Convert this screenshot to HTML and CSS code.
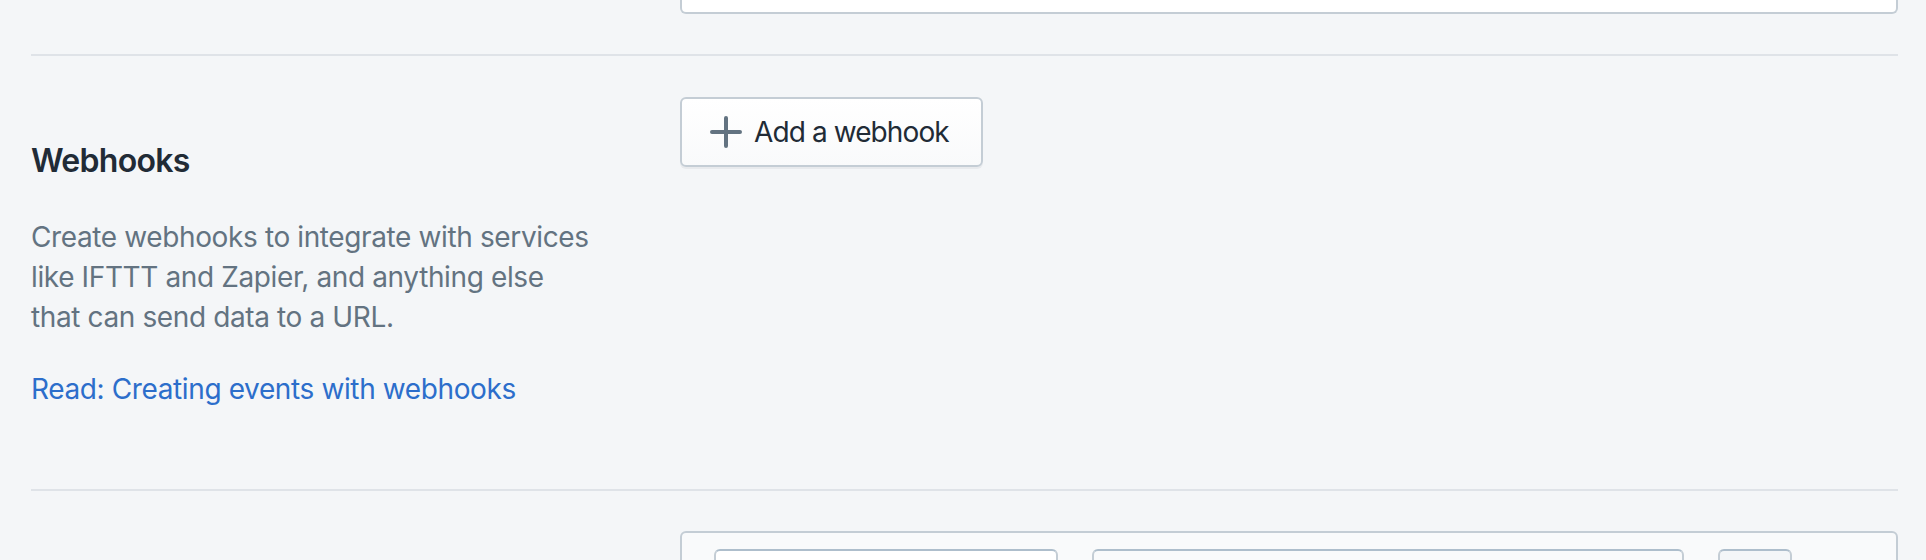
FILE: index.html
```html
<!DOCTYPE html>
<html lang="en">
<head>
<meta charset="utf-8">
<title>Webhooks settings</title>
<link rel="stylesheet" href="styles.css">
</head>
<body>
<div class="page">
  <section class="section section-top">
    <div class="annotation"></div>
    <div class="content">
      <div class="card card-clipped"></div>
    </div>
  </section>

  <section class="section">
    <div class="annotation">
      <h2 class="annotation-title">Webhooks</h2>
      <p class="annotation-text">Create webhooks to integrate with services like IFTTT and Zapier, and anything else that can send data to a URL.</p>
      <p class="annotation-text"><a class="link" href="#">Read: Creating events with webhooks</a></p>
    </div>
    <div class="content">
      <button class="button" type="button">
        <svg class="button-icon" viewBox="0 0 20 20" aria-hidden="true"><path d="M17 9h-6V3a1 1 0 1 0-2 0v6H3a1 1 0 1 0 0 2h6v6a1 1 0 1 0 2 0v-6h6a1 1 0 1 0 0-2z"/></svg>
        <span class="button-label">Add a webhook</span>
      </button>
    </div>
  </section>

  <section class="section section-bottom">
    <div class="annotation"></div>
    <div class="content">
      <div class="card card-subdued">
        <div class="field-row">
          <div class="field field-key"></div>
          <div class="field field-value"></div>
          <div class="field field-action"></div>
        </div>
      </div>
    </div>
  </section>
</div>
</body>
</html>
```

FILE: styles.css
```css
html, body {
  margin: 0;
  padding: 0;
  background: #f4f6f8;
}

body {
  font-family: Inter, "Noto Sans", "Liberation Sans", sans-serif;
  color: #212b36;
  height: 560px;
  overflow: hidden;
}

.page {
  padding: 0 28px 0 31px;
}

.section {
  display: grid;
  grid-template-columns: 1fr 2fr;
  column-gap: 40px;
  padding: 41px 0 40px;
  border-top: 2px solid #dfe3e8;
}

.section-top {
  border-top: none;
  padding-top: 0;
}

.section-bottom {
  padding-top: 40px;
}

.annotation {
  padding: 40px 0;
}

.section-top .annotation,
.section-bottom .annotation {
  padding: 0;
}

.annotation-title {
  margin: 0;
  font-size: 32px;
  line-height: 48px;
  font-weight: 600;
  letter-spacing: -0.7px;
  color: #212b36;
}

.annotation-text {
  margin: 32px 0 0;
  max-width: 563px;
  font-size: 28px;
  line-height: 40px;
  letter-spacing: -0.38px;
  color: #637381;
}

.link {
  color: #2c6ecb;
  text-decoration: none;
}

.card {
  background: #fff;
  border: 2px solid #c4cdd5;
  border-radius: 6px;
  box-sizing: border-box;
}

.card-clipped {
  height: 14px;
  border-top: none;
  border-radius: 0 0 6px 6px;
}

.card-subdued {
  background: #f9fafb;
  padding: 16px 32px 0;
  height: 120px;
}

.button {
  display: inline-flex;
  align-items: center;
  box-sizing: border-box;
  height: 70px;
  padding: 0 32px;
  border: 2px solid #c4cdd5;
  border-radius: 6px;
  background: linear-gradient(180deg, #ffffff, #f9fafb);
  box-shadow: 0 2px 0 0 rgba(22, 29, 37, 0.05);
  font-family: inherit;
  font-size: 28px;
  line-height: 40px;
  letter-spacing: -0.9px;
  color: #212b36;
  cursor: pointer;
}

.button-icon {
  width: 40px;
  height: 40px;
  margin: 0 8px 0 -8px;
  fill: #637381;
}

.field-row {
  display: flex;
  gap: 34px;
}

.field {
  box-sizing: border-box;
  height: 72px;
  border: 2px solid #c4cdd5;
  border-top-color: #aebecc;
  border-radius: 6px;
  background: #fff;
}

.field-key {
  width: 344px;
}

.field-value {
  width: 592px;
  background: #f9fafb;
}

.field-action {
  width: 74px;
  background: #f4f6f8;
}
```
